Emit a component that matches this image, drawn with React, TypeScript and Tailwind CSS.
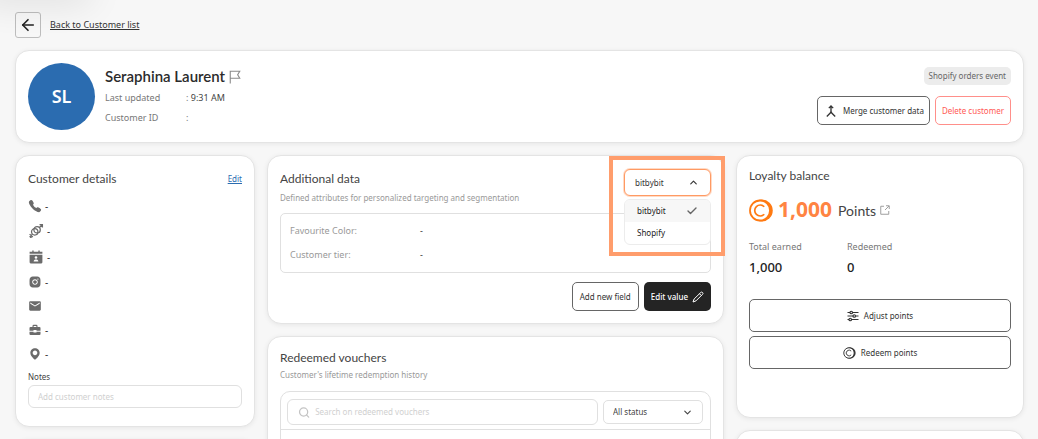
import { useState } from "react";
import type { ReactNode } from "react";
import { IoCall } from "react-icons/io5";
import { MdMail, MdMerge } from "react-icons/md";
import { BiSolidMap } from "react-icons/bi";
import { AiFillInstagram } from "react-icons/ai";
import { ArrowLeft, Check, ChevronDown, ChevronUp, Search } from "lucide-react";

function FlagIcon() {
  return (
    <svg viewBox="0 0 24 28" className="h-[14px] w-[12px] text-[#8a8a8a]" fill="none" stroke="currentColor" strokeWidth="2.2" aria-hidden="true">
      <path d="M2.5 27V2.5h19l-4.2 7 4.2 7h-19" />
    </svg>
  );
}

function GenderIcon() {
  return (
    <svg viewBox="-1 -1 30 30" className="size-[16px]" fill="none" stroke="currentColor" strokeWidth="2.4" aria-hidden="true">
      <circle cx="11.6" cy="15.6" r="6" />
      <circle cx="16" cy="11.6" r="6" />
      <path d="M20.4 7.4 26 2M20.6 2H26v5.4M22.4 2.6l3 3M7.4 20 2 25.4M2 19.8l6 5.6M3 26h3" />
    </svg>
  );
}

function BirthdayIcon() {
  return (
    <svg viewBox="-1 -1 30 30" className="size-[16px]" fill="currentColor" aria-hidden="true">
      <path d="M2 4h5V2h2.6v2h8.8V2H21v2h5v4H2zM2 10h24v14a2 2 0 0 1-2 2H4a2 2 0 0 1-2-2z" />
      <circle cx="14" cy="15" r="2.4" fill="#fff" />
      <path d="M9.5 22.6c0-2.8 2-4 4.5-4s4.5 1.2 4.5 4z" fill="#fff" />
    </svg>
  );
}

function BriefcaseIcon() {
  return (
    <svg viewBox="-2 -2 28 28" className="size-[14px]" fill="currentColor" aria-hidden="true">
      <path fillRule="evenodd" d="M7 6V4a2.5 2.5 0 0 1 2.5-2.5h5A2.5 2.5 0 0 1 17 4v2h4a2 2 0 0 1 2 2v5.5h-8V12H9v1.5H1V8a2 2 0 0 1 2-2zm2.3 0h5.4V3.8H9.3zM1 15.5h8V17h6v-1.5h8V20a2 2 0 0 1-2 2H3a2 2 0 0 1-2-2z" />
    </svg>
  );
}

function PencilIcon() {
  return (
    <svg viewBox="0 0 24 24" className="size-[12px]" fill="none" stroke="currentColor" strokeWidth="2" strokeLinejoin="round" aria-hidden="true">
      <path d="M17.5 3a2.5 2.5 0 0 1 3.6 3.6L8 19.7 2 22l2.200-6z" />
      <path d="m15 5.5 3.6 3.6" />
    </svg>
  );
}

function ExternalIcon() {
  return (
    <svg viewBox="0 0 20 20" className="size-[10px] text-[#9a9a9a]" fill="none" stroke="currentColor" strokeWidth="1.9" aria-hidden="true">
      <path d="M8 2.5H1.5v16h16V12M12 1.5h6.5V8M18 2l-8 8" />
    </svg>
  );
}

function SlidersIcon() {
  return (
    <svg viewBox="0 0 24 24" className="size-[12px]" fill="none" stroke="currentColor" strokeWidth="2.4" aria-hidden="true">
      <path d="M1 5h5M11 5h12M1 12h11M17 12h6M1 19h3M9 19h14" />
      <circle cx="8.5" cy="5" r="2.5" />
      <circle cx="14.5" cy="12" r="2.5" />
      <circle cx="6.5" cy="19" r="2.5" />
    </svg>
  );
}

function CoinIcon({ className }: { className: string }) {
  return (
    <svg viewBox="0 0 48 46" className={className} fill="none" stroke="currentColor" aria-hidden="true">
      <circle cx="25.5" cy="23" r="22" fill="currentColor" stroke="none" />
      <circle cx="22" cy="23" r="20" fill="#fff" strokeWidth="3.6" />
      <path d="M30.5 15.5a11 11 0 1 0 0 15" strokeWidth="3.4" />
    </svg>
  );
}

function Card({ children, className }: { children: ReactNode; className: string }) {
  return (
    <section className={`rounded-[14px] border border-[#e4e4e4] bg-white shadow-[0_1px_5px_rgba(0,0,0,0.07)] ${className}`}>
      {children}
    </section>
  );
}

const details = [
  { label: "Phone", value: "-", icon: <IoCall className="size-[14px]" /> },
  { label: "Gender", value: "-", icon: <GenderIcon /> },
  { label: "Birthday", value: "-", icon: <BirthdayIcon /> },
  { label: "Instagram", value: "-", icon: <AiFillInstagram className="size-[14px]" /> },
  { label: "Email", value: "", icon: <MdMail className="size-[14px]" /> },
  { label: "Company", value: "-", icon: <BriefcaseIcon /> },
  { label: "Address", value: "-", icon: <BiSolidMap className="size-[14px]" /> },
];

const sources = ["bitbybit", "Shopify"];

function SourcePicker() {
  const [open, setOpen] = useState(true);
  const [source, setSource] = useState("bitbybit");
  return (
    <div className="relative w-[87px]">
      <button
        type="button"
        aria-haspopup="listbox"
        aria-expanded={open}
        onClick={() => setOpen(!open)}
        className="flex h-[27px] w-full items-center justify-between rounded-md border border-[#ff9a63] bg-white pr-[11px] pl-[10px] text-[8px] text-[#333] shadow-[0_0_0_1px_rgba(255,150,90,0.35)]"
      >
        {source}
        <ChevronUp className="size-[11px]" strokeWidth={2.5} />
      </button>
      {open && (
        <ul role="listbox" aria-label="Data source" className="absolute top-[30px] left-0 z-10 w-full overflow-hidden rounded-md border border-[#ececec] bg-white">
          {sources.map((name) => (
            <li
              key={name}
              role="option"
              aria-selected={name === source}
              onClick={() => setSource(name)}
              className="flex h-[22px] items-center justify-between px-3 text-[8px] text-[#222] aria-selected:bg-[#f7f7f7]"
            >
              {name}
              {name === source && <Check className="size-[12px] text-[#666]" strokeWidth={2.8} />}
            </li>
          ))}
        </ul>
      )}
      <div className="pointer-events-none absolute -top-[13px] -right-[14px] z-20 h-[100px] w-[116px] border-4 border-[#ff9d6c]" />
    </div>
  );
}

const outlineButton = "flex items-center justify-center rounded-[5px] border border-[#666] bg-white text-[8px] text-[#333]";

export default function App() {
  return (
    <main className="relative h-screen overflow-hidden bg-[#f7f7f7] pt-3 pr-[14px] pl-[15px] font-['Noto_Sans',sans-serif] text-[#444]">
      <div className="pointer-events-none absolute -top-5 -left-5 h-5 w-[110px] shadow-[0_0_36px_rgba(0,0,0,0.14)]" />
      <nav className="flex items-center gap-[9px]">
        <button type="button" aria-label="Back" className="flex size-[26px] items-center justify-center rounded-[3px] border border-[#bdbdbd] text-[#222]">
          <ArrowLeft className="size-[18px]" strokeWidth={2.2} />
        </button>
        <a href="#customers" className="text-[9px] text-[#333] underline underline-offset-1">Back to Customer list</a>
      </nav>

      <Card className="mt-3 flex justify-between p-3">
        <div className="flex items-center gap-[10px]">
          <div className="flex size-[67px] items-center justify-center rounded-full bg-[#2b6cb0] text-[18px] font-semibold text-white">SL</div>
          <div>
            <h1 className="flex h-[22px] items-center gap-1 font-[Lato,sans-serif] text-[15px] font-semibold text-[#2b2b2b]">
              Seraphina Laurent
              <FlagIcon />
            </h1>
            <dl className="grid grid-cols-[81px_auto] text-[9px] leading-[20px] text-[#777]">
              <dt>Last updated</dt>
              <dd>: <span className="text-[#444]">9:31 AM</span></dd>
              <dt>Customer ID</dt>
              <dd>:</dd>
            </dl>
          </div>
        </div>
        <div className="flex flex-col items-end gap-[11px] pt-1">
          <span className="flex h-[18px] items-center rounded-[5px] bg-[#ececec] px-[5px] text-[8px] text-[#666]">Shopify orders event</span>
          <div className="flex gap-[5px]">
            <button type="button" className={`${outlineButton} h-[29px] gap-1 px-[5px]`}>
              <MdMerge className="size-[16px]" />
              Merge customer data
            </button>
            <button type="button" className="h-[29px] rounded-[5px] border border-[#ff8f8a] bg-white px-[6px] text-[8px] text-[#ff5a55]">Delete customer</button>
          </div>
        </div>
      </Card>

      <div className="mt-3 grid grid-cols-[240fr_457fr_288fr] items-start gap-3">
        <div className="flex flex-col gap-3">
          <Card className="px-3 pt-3 pb-[18px]">
            <div className="flex h-[22px] items-center justify-between">
              <h2 className="font-[Lato,sans-serif] text-[12px]">Customer details</h2>
              <a href="#edit" className="text-[8px] text-[#2b6cb0] underline">Edit</a>
            </div>
            <ul className="mt-1 text-[#6b6b6b]">
              {details.map((item) => (
                <li key={item.label} className="flex items-center gap-[3px] py-[5px] text-[10px] leading-[14px]">
                  <span title={item.label}>{item.icon}</span>
                  <span className="text-[#333]">{item.value}</span>
                </li>
              ))}
            </ul>
            <label htmlFor="notes" className="mt-1 block text-[8px] leading-[14px]">Notes</label>
            <input id="notes" placeholder="Add customer notes" className="mt-px block h-[23px] w-full rounded-[6px] border border-[#e0e0e0] px-[9px] text-[8px] placeholder:text-[#d0d0d0]" />
          </Card>
          <Card className="h-[120px]">{null}</Card>
        </div>

        <div className="flex flex-col gap-3">
          <Card className="p-3">
            <div className="flex justify-between">
              <div>
                <h2 className="flex h-[22px] items-center font-[Lato,sans-serif] text-[12px]">Additional data</h2>
                <p className="text-[8px] leading-[16px] text-[#999]">Defined attributes for personalized targeting and segmentation</p>
              </div>
              <div className="h-[45px] pt-px">
                <SourcePicker />
              </div>
            </div>
            <dl className="grid grid-cols-[130px_1fr] rounded-[5px] border border-[#e0e0e0] px-[9px] py-[5px] text-[9px] leading-[24px] text-[#999]">
              <dt>Favourite Color:</dt>
              <dd className="text-[#333]">-</dd>
              <dt>Customer tier:</dt>
              <dd className="text-[#333]">-</dd>
            </dl>
            <div className="mt-[9px] flex justify-end gap-[5px]">
              <button type="button" className={`${outlineButton} h-[29px] px-[7px]`}>Add new field</button>
              <button type="button" className="flex h-[29px] items-center gap-1 rounded-[5px] bg-[#242424] px-[7px] text-[8px] font-medium text-white">
                Edit value
                <PencilIcon />
              </button>
            </div>
          </Card>
          <Card className="p-3">
            <h2 className="font-[Lato,sans-serif] text-[12px] leading-[18px]">Redeemed vouchers</h2>
            <p className="text-[8px] leading-[16px] text-[#999]">Customer's lifetime redemption history</p>
            <div className="mt-2 rounded-[10px] border border-[#e0e0e0]">
              <div className="flex items-center gap-[5px] border-b border-[#e0e0e0] pt-[7px] pr-[7px] pb-1 pl-[6px]">
                <label className="flex h-[26px] flex-1 items-center gap-[5px] rounded-[6px] border border-[#e0e0e0] px-[10px]">
                  <Search className="size-[13px] text-[#c4c4c4]" strokeWidth={2.5} />
                  <input aria-label="Search on redeemed vouchers" placeholder="Search on redeemed vouchers" className="w-full text-[8px] outline-none placeholder:text-[#d0d0d0]" />
                </label>
                <div className="relative">
                  <select aria-label="Status" className="block h-[24px] w-[100px] appearance-none rounded-[5px] border border-[#e0e0e0] bg-white pl-[9px] text-[8px] text-[#444]">
                    <option>All status</option>
                    <option>Active</option>
                    <option>Used</option>
                  </select>
                  <ChevronDown className="pointer-events-none absolute top-[7px] right-[10px] size-[11px]" strokeWidth={2.5} />
                </div>
              </div>
              <div className="h-[60px]" />
            </div>
          </Card>
        </div>

        <div className="flex flex-col gap-3">
          <Card className="px-3 pt-3 pb-12">
            <h2 className="font-[Lato,sans-serif] text-[12px] leading-[16px]">Loyalty balance</h2>
            <div className="mt-3 flex h-[28px] items-center">
              <CoinIcon className="h-[23px] w-[24px] text-[#ff7a12]" />
              <strong className="ml-[5px] text-[21px] font-bold text-[#ff8442]">1,000</strong>
              <span className="mr-1 ml-[6px] font-[Lato,sans-serif] text-[14px]">Points</span>
              <ExternalIcon />
            </div>
            <dl className="mt-[15px] grid grid-cols-[98px_auto] justify-start">
              <div>
                <dt className="text-[9px] leading-[16px] text-[#777]">Total earned</dt>
                <dd className="text-[13px] leading-[24px] font-medium text-[#222]">1,000</dd>
              </div>
              <div>
                <dt className="text-[9px] leading-[16px] text-[#777]">Redeemed</dt>
                <dd className="text-[13px] leading-[24px] font-medium text-[#222]">0</dd>
              </div>
            </dl>
            <div className="mt-5 flex flex-col gap-1">
              <button type="button" className={`${outlineButton} h-[33px] gap-[5px]`}>
                <SlidersIcon />
                Adjust points
              </button>
              <button type="button" className={`${outlineButton} h-[33px] gap-[5px]`}>
                <CoinIcon className="h-[12px] w-[13px]" />
                Redeem points
              </button>
            </div>
          </Card>
          <Card className="h-[120px]">{null}</Card>
        </div>
      </div>
    </main>
  );
}
